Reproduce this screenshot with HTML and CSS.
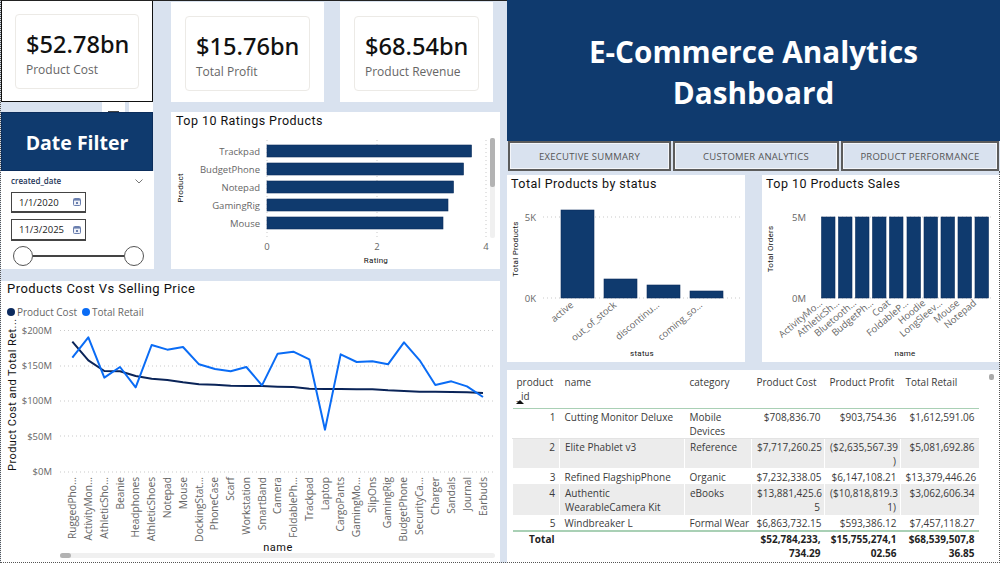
FILE: index.html
```html
<!DOCTYPE html>
<html lang="en">
<head>
<meta charset="utf-8">
<title>E-Commerce Analytics Dashboard</title>
<link rel="stylesheet" href="styles.css">
</head>
<body>
<div class="page">
  <div class="left">
    <div class="left-top">
      <div class="col-a">
        <div class="panel card-panel selected">
          <div class="card"><div class="value">$52.78bn</div><div class="label">Product Cost</div></div>
        </div>
        <div class="stub"><span class="stub-cell"><i></i></span><span class="stub-end"></span></div>
        <div class="filter-head">Date Filter</div>
        <div class="panel slicer">
          <div class="slicer-title"><span>created_date</span>
            <svg class="chev" width="8" height="5" viewBox="0 0 8 5"><path d="M.5.5 4 4 7.500.5" fill="none" stroke="#555" stroke-width=".8"/></svg>
          </div>
          <div class="date-box first"><span>1/1/2020</span>
            <svg width="8" height="8" viewBox="0 0 8 8"><rect x=".5" y=".5" width="7" height="7" rx="1" fill="#eef1f8" stroke="#6a7fae"/><rect x="1" y="1" width="6" height="1.600" fill="#6a7fae"/><rect x="3" y="4" width="2" height="2" fill="#6a7fae"/></svg>
          </div>
          <div class="date-box"><span>11/3/2025</span>
            <svg width="8" height="8" viewBox="0 0 8 8"><rect x=".5" y=".5" width="7" height="7" rx="1" fill="#eef1f8" stroke="#6a7fae"/><rect x="1" y="1" width="6" height="1.600" fill="#6a7fae"/><rect x="3" y="4" width="2" height="2" fill="#6a7fae"/></svg>
          </div>
          <div class="range"><span class="knob"></span><span class="track"></span><span class="knob"></span></div>
        </div>
      </div>
      <div class="col-b">
        <div class="card-row">
          <div class="panel card-panel"><div class="card"><div class="value">$15.76bn</div><div class="label">Total Profit</div></div></div>
          <div class="panel card-panel"><div class="card"><div class="value">$68.54bn</div><div class="label">Product Revenue</div></div></div>
        </div>
        <div class="panel ratings">
          <div class="vis-title">Top 10 Ratings Products</div>
          <svg class="chart" width="329" height="157" viewBox="171 112 329 157">
            <g class="grid">
              <line x1="267" y1="140" x2="267" y2="240"/><line x1="377" y1="140" x2="377" y2="240"/><line x1="486" y1="140" x2="486" y2="240"/>
            </g>
            <g class="bar">
              <rect x="267" y="145" width="204.500" height="12"/>
              <rect x="267" y="163" width="196.500" height="12"/>
              <rect x="267" y="181" width="186.500" height="12"/>
              <rect x="267" y="199" width="181" height="12"/>
              <rect x="267" y="217" width="176" height="12"/>
            </g>
            <g class="tick end">
              <text x="260" y="155">Trackpad</text>
              <text x="260" y="173">BudgetPhone</text>
              <text x="260" y="191">Notepad</text>
              <text x="260" y="209">GamingRig</text>
              <text x="260" y="227">Mouse</text>
            </g>
            <g class="tick mid">
              <text x="267" y="250">0</text><text x="377" y="250">2</text><text x="486" y="250">4</text>
            </g>
            <text class="axis mid" x="376" y="263">Rating</text>
            <text class="axis mid" transform="translate(183 188) rotate(-90)">Product</text>
            <rect class="sb-track" x="490" y="138" width="5" height="100" rx="2"/>
            <rect class="sb-thumb" x="490" y="138" width="5" height="49" rx="2"/>
          </svg>
        </div>
      </div>
    </div>
    <div class="panel linepanel">
      <div class="vis-title wide">Products Cost Vs Selling Price</div>
      <div class="legend">
        <span class="dot dark"></span><span>Product Cost</span>
        <span class="dot bright"></span><span>Total Retail</span>
      </div>
      <svg class="chart" width="499" height="282" viewBox="1 281 499 282">
        <g class="grid">
          <line x1="60" y1="330.500" x2="495" y2="330.500"/><line x1="60" y1="366" x2="495" y2="366"/><line x1="60" y1="401" x2="495" y2="401"/><line x1="60" y1="436" x2="495" y2="436"/><line x1="60" y1="472" x2="495" y2="472"/>
        </g>
        <g class="tick end">
          <text x="52" y="334">$200M</text><text x="52" y="369">$150M</text><text x="52" y="404">$100M</text><text x="52" y="440">$50M</text><text x="52" y="475">$0M</text>
        </g>
        <g transform="translate(0 280) scale(.33333)" fill="none">
          <polyline class="cost-line" points="217,185 265,241 313,273 360,274 407,288 455,296 502,300 549,307 597,313 645,314 692,317 739,318 786,318 833,320 880,321 928,326 975,327 1022,327 1070,328 1117,328 1164,331 1212,333 1259,335 1306,335 1354,336 1401,337 1449,339"/>
          <polyline class="retail-line" points="217,233 265,172 313,293 360,261 407,322 455,195 502,209 549,201 597,253 645,267 692,274 739,261 786,316 833,221 880,215 928,238 975,449 1022,223 1070,246 1117,244 1164,253 1212,187 1259,241 1306,315 1354,304 1401,319 1449,351"/>
        </g>
        <g class="tick vert">
          <text transform="translate(76 477) rotate(-90)">RuggedPho...</text>
          <text transform="translate(92 477) rotate(-90)">ActivityMon...</text>
          <text transform="translate(108 477) rotate(-90)">AthleticSho...</text>
          <text transform="translate(124 477) rotate(-90)">Beanie</text>
          <text transform="translate(139 477) rotate(-90)">Headphones</text>
          <text transform="translate(155 477) rotate(-90)">AthleticShoes</text>
          <text transform="translate(171 477) rotate(-90)">Notepad</text>
          <text transform="translate(187 477) rotate(-90)">Mouse</text>
          <text transform="translate(203 477) rotate(-90)">DockingStat...</text>
          <text transform="translate(218 477) rotate(-90)">PhoneCase</text>
          <text transform="translate(234 477) rotate(-90)">Scarf</text>
          <text transform="translate(250 477) rotate(-90)">Workstation</text>
          <text transform="translate(266 477) rotate(-90)">SmartBand</text>
          <text transform="translate(281 477) rotate(-90)">Camera</text>
          <text transform="translate(297 477) rotate(-90)">FoldablePh...</text>
          <text transform="translate(313 477) rotate(-90)">Trackpad</text>
          <text transform="translate(329 477) rotate(-90)">Laptop</text>
          <text transform="translate(344 477) rotate(-90)">CargoPants</text>
          <text transform="translate(360 477) rotate(-90)">GamingMo...</text>
          <text transform="translate(376 477) rotate(-90)">SlipOns</text>
          <text transform="translate(391 477) rotate(-90)">GamingRig</text>
          <text transform="translate(407 477) rotate(-90)">BudgetPhone</text>
          <text transform="translate(423 477) rotate(-90)">SecurityCa...</text>
          <text transform="translate(439 477) rotate(-90)">Charger</text>
          <text transform="translate(455 477) rotate(-90)">Sandals</text>
          <text transform="translate(471 477) rotate(-90)">Journal</text>
          <text transform="translate(487 477) rotate(-90)">Earbuds</text>
        </g>
        <text class="axis-lg mid" x="278" y="551">name</text>
        <text class="axis-lg" transform="translate(16 471) rotate(-90)">Product Cost and Total Ret...</text>
        <rect class="sb-track" x="60" y="553" width="435" height="5" rx="2.500"/>
        <rect class="sb-thumb" x="60" y="553" width="11" height="5" rx="2.500"/>
      </svg>
    </div>
  </div>

  <div class="right">
    <div class="banner">E-Commerce Analytics<br>Dashboard</div>
    <div class="nav">
      <div class="nav-btn b1">EXECUTIVE SUMMARY</div>
      <div class="nav-btn b2">CUSTOMER ANALYTICS</div>
      <div class="nav-btn b3">PRODUCT PERFORMANCE</div>
    </div>
    <div class="charts">
      <div class="panel columns c1">
        <div class="vis-title">Total Products by status</div>
        <svg class="chart" width="238" height="187" viewBox="507 175 238 187">
          <g class="grid">
            <line x1="543" y1="217" x2="740" y2="217"/><line x1="543" y1="298" x2="740" y2="298"/>
          </g>
          <g class="bar">
            <rect x="561" y="210" width="33" height="88"/>
            <rect x="604" y="279" width="33" height="19"/>
            <rect x="647" y="285" width="33" height="13"/>
            <rect x="690" y="291" width="33" height="7"/>
          </g>
          <g class="tick end">
            <text x="536" y="221">5K</text><text x="536" y="302">0K</text>
          </g>
          <g class="tick end">
            <text transform="translate(574 306) rotate(-40)">active</text>
            <text transform="translate(617 306) rotate(-40)">out_of_stock</text>
            <text transform="translate(660 306) rotate(-40)">discontinu...</text>
            <text transform="translate(703 306) rotate(-40)">coming_so...</text>
          </g>
          <text class="axis mid" x="642" y="356">status</text>
          <text class="axis mid" transform="translate(518 249) rotate(-90)">Total Products</text>
        </svg>
      </div>
      <div class="panel columns c2">
        <div class="vis-title">Top 10 Products Sales</div>
        <svg class="chart" width="238" height="187" viewBox="762 175 238 187">
          <g class="grid">
            <line x1="822" y1="217" x2="992" y2="217"/><line x1="822" y1="298" x2="992" y2="298"/>
          </g>
          <g class="bar">
            <rect x="821.500" y="217" width="13.500" height="81"/>
            <rect x="838.500" y="217" width="13.500" height="81"/>
            <rect x="855.500" y="217" width="13.500" height="81"/>
            <rect x="872.500" y="217" width="13.500" height="81"/>
            <rect x="889.500" y="217" width="13.500" height="81"/>
            <rect x="907" y="217" width="13.500" height="81"/>
            <rect x="924" y="217" width="13.500" height="81"/>
            <rect x="941" y="217" width="13.500" height="81"/>
            <rect x="958" y="217" width="13.500" height="81"/>
            <rect x="975" y="217" width="13.500" height="81"/>
          </g>
          <g class="tick end">
            <text x="806" y="221">5M</text><text x="806" y="302">0M</text>
          </g>
          <g class="tick end">
            <text transform="translate(823 304) rotate(-40)">ActivityMo...</text>
            <text transform="translate(840 304) rotate(-40)">AthleticSh...</text>
            <text transform="translate(857 304) rotate(-40)">Bluetooth...</text>
            <text transform="translate(874 304) rotate(-40)">BudgetPh...</text>
            <text transform="translate(891 304) rotate(-40)">Coat</text>
            <text transform="translate(909 304) rotate(-40)">FoldableP...</text>
            <text transform="translate(926 304) rotate(-40)">Hoodie</text>
            <text transform="translate(943 304) rotate(-40)">LongSleev...</text>
            <text transform="translate(960 304) rotate(-40)">Mouse</text>
            <text transform="translate(977 304) rotate(-40)">Notepad</text>
          </g>
          <text class="axis mid" x="905" y="356">name</text>
          <text class="axis mid" transform="translate(773 249) rotate(-90)">Total Orders</text>
        </svg>
      </div>
    </div>
    <div class="panel tablepanel">
      <table class="data">
        <colgroup><col class="w-id"><col class="w-name"><col class="w-cat"><col class="w-cost"><col class="w-profit"><col class="w-retail"></colgroup>
        <thead>
          <tr><th class="l id-h">product<br>_id<span class="sort"></span></th><th class="l">name</th><th class="l">category</th><th class="l">Product Cost</th><th class="l">Product Profit</th><th class="l">Total Retail</th></tr>
        </thead>
        <tbody>
          <tr class="r1"><td class="n">1</td><td>Cutting Monitor Deluxe</td><td>Mobile<br>Devices</td><td class="n">$708,836.70</td><td class="n">$903,754.36</td><td class="n">$1,612,591.06</td></tr>
          <tr class="r2 alt"><td class="n">2</td><td>Elite Phablet v3</td><td>Reference</td><td class="n">$7,717,260.25</td><td class="n">($2,635,567.39<br>)</td><td class="n">$5,081,692.86</td></tr>
          <tr class="r3"><td class="n">3</td><td>Refined FlagshipPhone</td><td>Organic</td><td class="n">$7,232,338.05</td><td class="n">$6,147,108.21</td><td class="n">$13,379,446.26</td></tr>
          <tr class="r4 alt"><td class="n">4</td><td>Authentic<br>WearableCamera Kit</td><td>eBooks</td><td class="n">$13,881,425.6<br>5</td><td class="n">($10,818,819.3<br>1)</td><td class="n">$3,062,606.34</td></tr>
          <tr class="r5"><td class="n">5</td><td>Windbreaker L</td><td>Formal Wear</td><td class="n">$6,863,732.15</td><td class="n">$593,386.12</td><td class="n">$7,457,118.27</td></tr>
        </tbody>
        <tfoot>
          <tr><td class="n">Total</td><td></td><td></td><td class="n">$52,784,233,<br>734.29</td><td class="n">$15,755,274,1<br>02.56</td><td class="n">$68,539,507,8<br>36.85</td></tr>
        </tfoot>
      </table>
      <span class="tbl-thumb"></span>
    </div>
  </div>
  <div class="focus-edge"></div>
</div>
</body>
</html>
```
FILE: styles.css
```css
* { box-sizing: border-box; }
html, body { margin: 0; padding: 0; }
body { background: #d9e2ef; font-family: "Open Sans", "Noto Sans", sans-serif; color: #222; overflow: hidden; }
.page { position: relative; width: 1000px; height: 563px; display: flex; background: #d9e2ef; overflow: hidden; }
.panel { background: #fff; }

.left { width: 507px; flex: none; display: flex; flex-direction: column; padding-left: 1px; border-top: 1px solid #222; height: 563px; }
.left-top { display: flex; height: 268px; }
.col-a { width: 153px; flex: none; display: flex; flex-direction: column; }
.col-b { width: 329px; margin-left: 17px; display: flex; flex-direction: column; }
.card-row { display: flex; gap: 16px; padding-top: 1px; height: 101px; }
.card-row .card-panel { width: 153px; height: 100px; }

.card-panel { padding: 14px 14px; }
.card-panel.selected { height: 101px; border: 1px solid #111; border-top: 0; padding: 13px 13px; width: 152px; }
.card { height: 75px; border: 1px solid #eceae6; border-radius: 4px; padding: 13px 10px; background: #fff; }
.value { font-family: "Noto Sans", sans-serif; font-weight: 500; font-size: 23.600px; line-height: 33px; color: #111; white-space: nowrap; }
.label { font-size: 12px; line-height: 16px; margin-top: 1px; color: #666; white-space: nowrap; }

.stub { height: 10px; display: flex; justify-content: flex-end; width: 152px; }
.stub-cell { width: 23px; background: #fff; margin-right: 4px; position: relative; display: flex; justify-content: center; align-items: flex-end; }
.stub-cell i { width: 11px; height: 1px; background: #444; }
.stub-end { width: 24px; background: #fff; }
.filter-head { height: 59px; width: 152px; background: #0f3a6e; border: 1px solid #0b2d5c; color: #fff; font-weight: 700; font-size: 19.500px; display: flex; align-items: center; justify-content: center; padding-top: 2px; }
.slicer { height: 98px; width: 153px; padding: 3px 10px 0; }
.slicer-title { display: flex; justify-content: space-between; align-items: center; font-size: 8px; line-height: 14px; color: #1d3557; font-weight: 600; padding-right: 1px; }
.date-box { width: 75px; height: 21px; border: 1px solid #444; border-bottom-width: 2px; display: flex; align-items: center; justify-content: space-between; padding: 0 4px 0 7px; font-size: 9.500px; color: #222; }
.date-box.first { margin-top: 4px; }
.date-box + .date-box { margin-top: 6px; height: 22px; }
.range { display: flex; align-items: center; margin: 5px 0 0 2px; width: 131px; }
.knob { width: 20px; height: 20px; flex: none; border: 1.500px solid #555; border-radius: 50%; background: #fff; }
.track { flex: 1; height: 2px; background: #444; }

.ratings { position: relative; height: 157px; margin-top: 10px; }
.vis-title { font-family: "Roboto", sans-serif; font-weight: 400; font-size: 12.500px; letter-spacing: .45px; line-height: 16px; color: #111; padding: 1px 0 0 5px; position: absolute; white-space: nowrap; z-index: 1; }
.columns .vis-title { padding-left: 4px; }
.chart { display: block; }
.grid line { stroke: #c9c9c9; stroke-width: 1; stroke-dasharray: 1 3; }
.bar rect { fill: #0f3a6e; stroke: #0b2d5c; stroke-width: .6; }
.tick text { font-size: 9.500px; fill: #666; }
.tick.end text { text-anchor: end; }
.tick.mid text { text-anchor: middle; }
.tick.vert text { text-anchor: end; font-size: 10.200px; }
.axis { font-family: "Roboto", sans-serif; font-size: 8px; font-weight: 400; letter-spacing: .25px; fill: #111; }
.axis-lg { font-family: "Roboto", sans-serif; font-size: 11px; font-weight: 400; fill: #111; letter-spacing: .45px; }
.mid { text-anchor: middle; }
.sb-track { fill: #f0f0f0; }
.sb-thumb { fill: #b3b3b3; }

.linepanel { position: relative; margin-top: 12px; width: 499px; height: 282px; }
.vis-title.wide { padding: 0 0 0 6px; top: 0; font-size: 13px; }
.legend { position: absolute; top: 24px; left: 6px; display: flex; align-items: center; font-size: 10px; color: #666; line-height: 14px; white-space: nowrap; z-index: 1; }
.legend .dot { width: 8px; height: 8px; border-radius: 50%; margin-right: 2px; }
.legend .dot.bright { margin-left: 5px; background: #0a6cf5; }
.legend .dot.dark { background: #0b2a5e; }
.linepanel .chart { position: absolute; left: 0; top: 0; }
.cost-line { stroke: #0a2458; stroke-width: 6; stroke-linejoin: round; }
.retail-line { stroke: #0a6cf5; stroke-width: 6; stroke-linejoin: round; }

.right { position: relative; width: 493px; flex: none; display: flex; flex-direction: column; }
.right::after { content: ""; position: absolute; right: 0; top: 171px; bottom: 0; border-right: 1px dotted #555; }
.banner { height: 141px; background: #0f3a6e; color: #fff; font-weight: 700; font-size: 29.700px; line-height: 41px; text-align: center; padding-top: 31px; }
.nav { height: 31px; display: flex; padding-left: 1px; gap: 2px; }
.nav-btn { height: 30px; background: #d9e2ef; border: 2px solid #5c5c5c; font-size: 9.500px; letter-spacing: .25px; color: #555; display: flex; align-items: center; justify-content: center; box-shadow: inset 0 0 0 1px #f4f6fa; white-space: nowrap; }
.b1 { width: 163px; }
.b2 { width: 166px; }
.b3 { width: 158px; }
.charts { display: flex; justify-content: space-between; margin-top: 3px; }
.columns { position: relative; width: 238px; height: 187px; }
.tablepanel { position: relative; margin-top: 8px; height: 193px; padding: 0 0 0 5px; overflow: hidden; }
.data { border-collapse: collapse; table-layout: fixed; width: 466px; font-size: 10px; color: #3a3a3a; }
.w-id { width: 47px; } .w-name { width: 125px; } .w-cat { width: 67px; } .w-cost { width: 73px; } .w-profit { width: 76px; } .w-retail { width: 78px; }
.data th, .data td { padding: 0 5px; vertical-align: top; line-height: 14px; font-weight: 400; white-space: nowrap; overflow: hidden; }
.data th { height: 38px; padding-top: 5px; border-bottom: 1px solid #a9d0b5; position: relative; }
.data th.l { text-align: left; }
.data th.id-h { padding-left: 4px; }
.sort { position: absolute; left: 3px; top: 30px; width: 0; height: 0; border-left: 4px solid transparent; border-right: 4px solid transparent; border-bottom: 4px solid #111; }
.data td { padding-top: 1px; }
.data td.n { text-align: right; padding-right: 4px; }
.data tr.alt td { background: #ececec; border-left: 1px solid #fff; }
.r1 td { height: 30px; border-bottom: 1px solid #e3e3e3; }
.r2 td { height: 30px; }
.r3 td { height: 16px; padding-top: 2px; }
.r4 td { height: 31px; padding-top: 2px; }
.r5 td { height: 15px; }
.data tfoot td { border-top: 2px solid #a9d0b5; font-weight: 700; color: #222; padding-top: 0; }
.data tfoot td.n:first-child { padding-right: 5px; }
.tbl-thumb { position: absolute; right: 6px; top: 4px; width: 5px; height: 6px; border-radius: 2px; background: #aaa; }

.focus-edge { position: absolute; inset: 0; border-left: 1px dotted #555; border-bottom: 1px dotted #555; pointer-events: none; }
```
